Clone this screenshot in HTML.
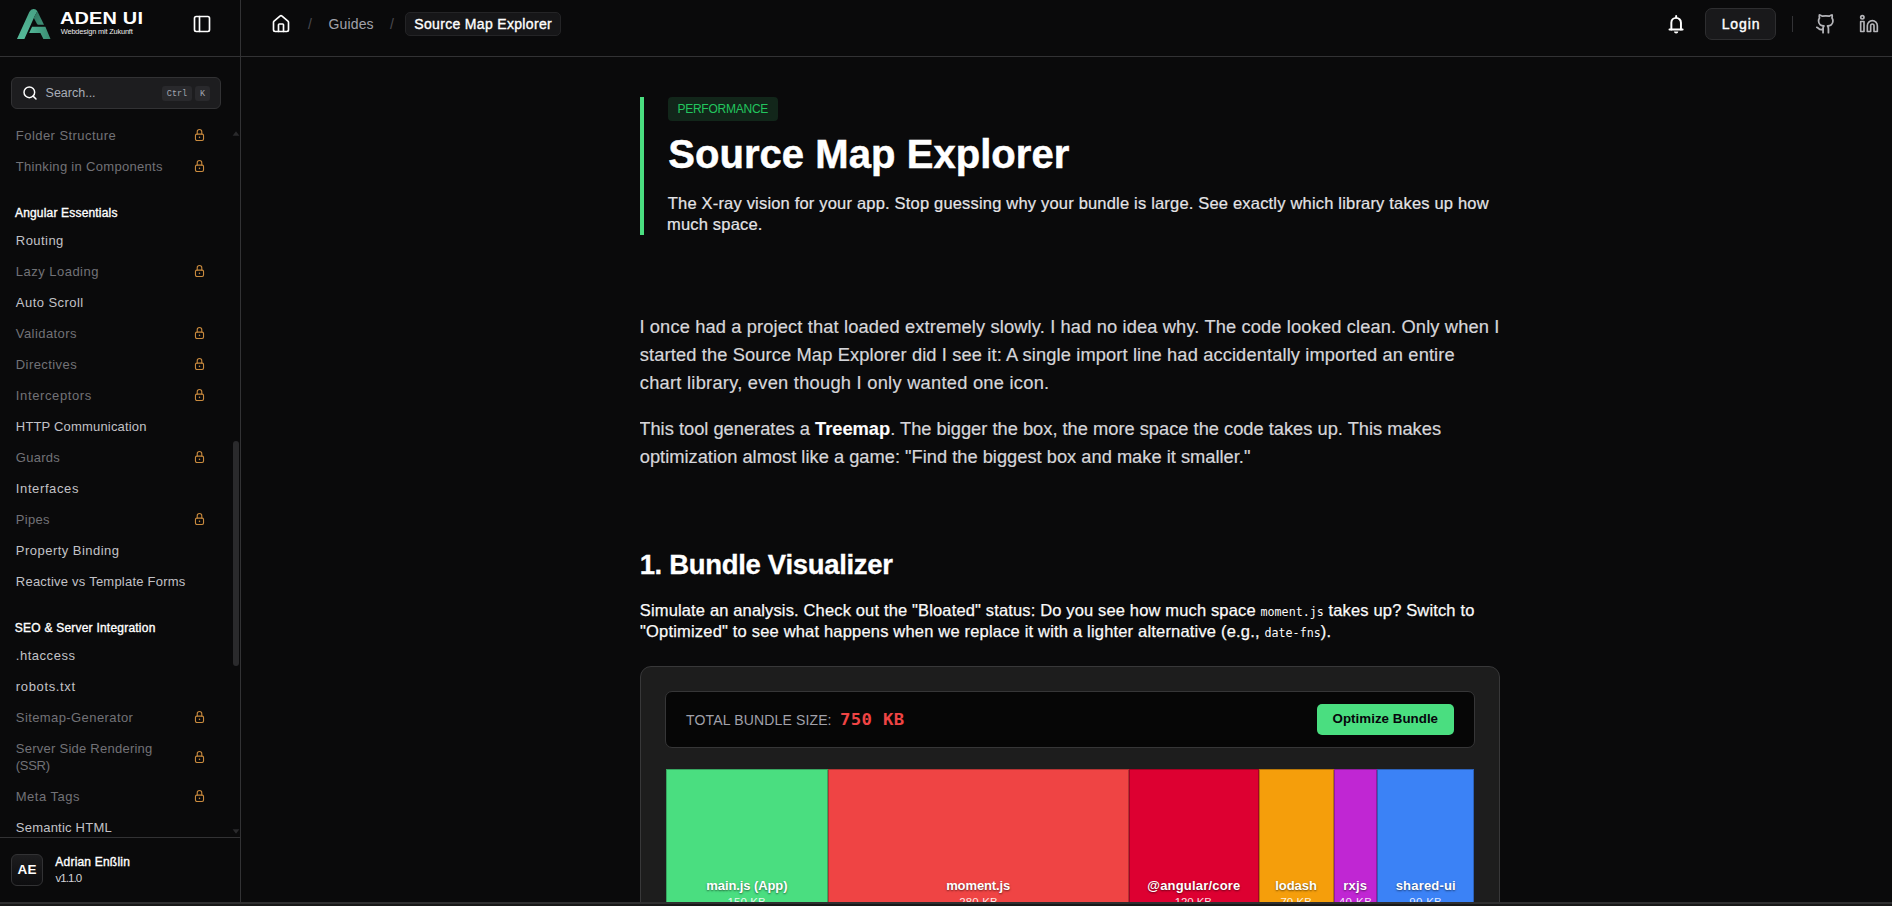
<!DOCTYPE html>
<html lang="en">
<head>
<meta charset="utf-8">
<title>Source Map Explorer - ADEN UI</title>
<style>
*{box-sizing:border-box;margin:0;padding:0}
html,body{width:1892px;height:906px;overflow:hidden;background:#0a0a0b;color:#fafafa;
  font-family:"Liberation Sans",sans-serif;}
body{position:relative}
.abs{position:absolute}
.t{position:absolute;white-space:nowrap}
/* ---------- sidebar ---------- */
#sidebar{position:absolute;left:0;top:0;width:241px;height:902px;border-right:1px solid #323234;background:#0a0a0b}
#sb-head{position:absolute;left:0;top:0;width:240px;height:57px;border-bottom:1px solid #323234}
#brand{left:60px;top:9px;font-weight:700;font-size:16.6px;line-height:20px;color:#fff;transform-origin:0 0;transform:scaleX(1.2)}
#tagline{left:61px;top:27px;font-size:7.4px;line-height:10px;color:#ececec}
#search{position:absolute;left:11px;top:77px;width:210px;height:32px;border:1px solid #323234;border-radius:6px;background:#1d1d1f}
#ph{left:35px;top:7px;font-size:12.5px;line-height:16px;color:#a9adb8}
.kbd{position:absolute;top:8px;height:15px;border-radius:3px;background:#29292c;color:#a1a5b0;font-family:"Liberation Mono",monospace;font-size:8.5px;line-height:17px;text-align:center}
#nav{position:absolute;left:0;top:120px;width:232px;height:717px;overflow:hidden}
.ni{position:absolute;left:16px;font-size:13px;line-height:17px;color:#c2c2c7;white-space:nowrap}
.ni.lk{color:#727277}
.nh{position:absolute;left:15px;font-size:12px;line-height:16px;color:#fff;white-space:nowrap;-webkit-text-stroke:.35px #fff}
.lock{position:absolute;left:194.4px;width:11px;height:13.75px;margin-top:.5px}
#sb-foot{position:absolute;left:0;top:837px;width:240px;height:65px;border-top:1px solid #323234}
#avatar{position:absolute;left:11px;top:16px;width:32px;height:32px;border-radius:6px;border:1px solid #323234;background:linear-gradient(180deg,#1d1d1f,#0d0d0f)}
#ae{left:6px;top:7px;font-weight:700;font-size:13.5px;line-height:16px;color:#fff}
#uname{left:55px;top:16px;font-size:12px;line-height:16px;color:#fff;-webkit-text-stroke:.35px #fff}
#uver{left:55px;top:32px;font-size:11.5px;line-height:16px;color:#d4d4d8}
#sbtrack .th{position:absolute;left:233px;top:441px;width:6px;height:225px;border-radius:3px;background:#2a2a2c}
/* ---------- topbar ---------- */
#topbar{position:absolute;left:241px;top:0;width:1651px;height:57px;border-bottom:1px solid #323234}
.crumb{position:absolute;top:16px;font-size:14px;line-height:17px;color:#a1a1aa;white-space:nowrap}
#cur{position:absolute;left:164px;top:12px;width:156px;height:24px;border-radius:5px;border:1px solid #242426;background:#161618}
#curt{left:9px;top:3px;font-size:14px;line-height:17px;color:#fff;-webkit-text-stroke:.35px #fff}
#login{position:absolute;left:1464px;top:8px;width:71px;height:32px;border:1px solid #2e2e30;border-radius:7px;background:#19191b}
#logint{left:17px;top:7px;font-size:14px;line-height:17px;color:#fff;-webkit-text-stroke:.4px #fff}
/* ---------- main ---------- */
#main{position:absolute;left:640px;top:57px;width:860px;height:845px;overflow:hidden}
#hero{position:absolute;left:0;top:40px;width:860px;height:138px;border-left:4px solid #4ade80}
#badge{position:absolute;left:24px;top:0;width:110px;height:24px;border-radius:4px;background:#12261a}
#badget{left:10px;top:4px;font-size:12px;line-height:16px;color:#22c55e}
h1{position:absolute;left:24px;top:33px;font-size:40px;line-height:48px;font-weight:700;color:#fff;white-space:nowrap;-webkit-text-stroke:.5px #fff}
.lead{position:absolute;left:24px;font-size:16.5px;line-height:21px;color:#e4e4e7;white-space:nowrap;-webkit-text-stroke:.2px #e4e4e7}
.p18{position:absolute;left:0;font-size:18.3px;line-height:28px;color:#d6d6da;white-space:nowrap;-webkit-text-stroke:.2px #d6d6da}
.p18 b{color:#fff}
h2{position:absolute;left:0;top:490px;font-size:27.5px;line-height:36px;font-weight:700;color:#fff;white-space:nowrap;-webkit-text-stroke:.3px #fff}
.p16{position:absolute;left:0;font-size:16.5px;line-height:21px;color:#fafafa;white-space:nowrap;-webkit-text-stroke:.25px #fafafa}
code{font-family:"DejaVu Sans Mono","Liberation Mono",monospace;font-size:11.7px;letter-spacing:0;-webkit-text-stroke:0}
#card{position:absolute;left:0;top:609px;width:860px;height:400px;border:1px solid #383839;border-radius:11px;background:#1d1d1d}
#bar{position:absolute;left:24px;top:24px;width:810px;height:57px;border:1px solid #363637;border-radius:7px;background:#060606}
#lbl{left:20px;top:19px;font-size:14px;line-height:18px;color:#a1a1aa}
#val{left:175px;top:16.5px;font-family:"DejaVu Sans Mono","Liberation Mono",monospace;font-weight:700;font-size:16px;line-height:22px;color:#ef4444;transform-origin:0 50%;transform:scaleX(1.08)}
#opt{position:absolute;left:651px;top:12px;width:137px;height:31px;border-radius:5px;background:#4ade80}
#optt{left:15px;top:7px;color:#06060c;font-weight:700;font-size:13.33px;line-height:16px}
#tree{position:absolute;left:25px;top:102px;width:808px;height:300px}
.seg{position:absolute;top:0;height:100%;border:1px solid rgba(0,0,0,.25);color:#fff;overflow:hidden}
.nm{position:absolute;top:109px;font-weight:700;font-size:13px;line-height:16px;text-shadow:0 1px 2px rgba(0,0,0,.55);white-space:nowrap;color:#fff}
.sz{position:absolute;top:125.5px;font-size:11.5px;line-height:14px;color:rgba(255,255,255,.88);white-space:nowrap}
#bottombar{position:absolute;left:0;top:902px;width:1892px;height:4px;background:#181818;border-top:2px solid #2f2f30}
</style>
<style id="fit">
#brand{letter-spacing:0.147px;margin-left:-0.22px}
#tagline{letter-spacing:-0.172px;margin-left:-0.21px}
#ph{letter-spacing:-0.005px;margin-left:-1.41px}
#n1{letter-spacing:0.448px;margin-left:-0.20px}
#n2{letter-spacing:0.310px;margin-left:-0.20px}
#n3{letter-spacing:0.177px;margin-left:-0.03px}
#n4{letter-spacing:0.450px;margin-left:-0.20px}
#n5{letter-spacing:0.478px;margin-left:-0.20px}
#n6{letter-spacing:0.457px;margin-left:-0.20px}
#n7{letter-spacing:0.430px;margin-left:-0.20px}
#n8{letter-spacing:0.420px;margin-left:-0.20px}
#n9{letter-spacing:0.621px;margin-left:-0.20px}
#n10{letter-spacing:0.179px;margin-left:-0.20px}
#n11{letter-spacing:0.252px;margin-left:-0.20px}
#n12{letter-spacing:0.613px;margin-left:-0.20px}
#n13{letter-spacing:0.274px;margin-left:-0.20px}
#n14{letter-spacing:0.475px;margin-left:-0.20px}
#n15{letter-spacing:0.231px;margin-left:-0.20px}
#n16{letter-spacing:0.222px;margin-left:-0.20px}
#n17{letter-spacing:0.524px;margin-left:-0.20px}
#n18{letter-spacing:0.639px;margin-left:-0.20px}
#n19{letter-spacing:0.408px;margin-left:-0.20px}
#n20a{letter-spacing:0.249px;margin-left:-0.20px}
#n20b{letter-spacing:-0.290px;margin-left:-0.20px}
#n21{letter-spacing:0.481px;margin-left:-0.20px}
#n22{letter-spacing:0.222px;margin-left:-0.20px}
#ae{letter-spacing:0.240px;margin-left:-0.40px}
#uname{letter-spacing:0.203px;margin-left:0.35px}
#uver{letter-spacing:-0.920px;margin-left:0.50px}
#guides{letter-spacing:0.134px;margin-left:-0.45px}
#curt{letter-spacing:0.328px;margin-left:-0.75px}
#logint{letter-spacing:0.937px;margin-left:-1.38px}
#badget{letter-spacing:-0.240px;margin-left:-0.62px}
#h1{letter-spacing:0.054px;margin-left:0.23px}
#ld1{letter-spacing:0.187px;margin-left:-0.24px}
#ld2{letter-spacing:0.193px;margin-left:-1.07px}
#p1a{letter-spacing:0.130px;margin-left:-0.60px}
#p1b{letter-spacing:0.120px;margin-left:-0.22px}
#p1c{letter-spacing:0.252px;margin-left:-0.22px}
#p2a{letter-spacing:-0.004px;margin-left:-0.71px}
#p2b{letter-spacing:0.002px;margin-left:-0.22px}
#h2{letter-spacing:-0.318px;margin-left:-0.39px}
#p3a{letter-spacing:0.149px;margin-left:-0.24px}
#p3b{letter-spacing:0.184px;margin-left:0.04px}
#lbl{letter-spacing:0.148px;margin-left:0.12px}
#val{letter-spacing:0.328px;margin-left:-1.48px}
#nm1{letter-spacing:-0.100px;margin-left:0.34px}
#nm2{letter-spacing:-0.117px;margin-left:-0.84px}
#nm3{letter-spacing:0.193px;margin-left:-0.71px}
#nm4{letter-spacing:-0.066px;margin-left:-0.73px}
#nm5{letter-spacing:0.165px;margin-left:-0.70px}
#nm6{letter-spacing:0.189px;margin-left:-0.30px}
#sz1{letter-spacing:0.098px;margin-left:-0.43px}
#sz2{letter-spacing:0.164px;margin-left:0.24px}
#sz3{letter-spacing:-0.118px;margin-left:-0.23px}
#sz4{letter-spacing:0.030px;margin-left:0.38px}
#sz5{letter-spacing:0.431px;margin-left:-0.22px}
#sz6{letter-spacing:0.284px;margin-left:0.31px}
#optt{letter-spacing:0.024px;margin-left:0.56px}
</style>
</head>
<body>
<div id="sidebar">
  <div id="sb-head">
    <svg class="abs" style="left:14px;top:6px" width="40" height="36" viewBox="14 6 40 36"><defs><linearGradient id="lg1" x1="0" y1="1" x2="0" y2="0"><stop offset="0" stop-color="#55b999"/><stop offset="1" stop-color="#48a386"/></linearGradient><linearGradient id="lg2" x1="0" y1="0" x2="1" y2="1"><stop offset="0" stop-color="#2f7660"/><stop offset="1" stop-color="#3f9077"/></linearGradient><linearGradient id="lg3" x1="0" y1="0" x2="1" y2="0"><stop offset="0" stop-color="#52b596"/><stop offset=".55" stop-color="#45a083"/><stop offset="1" stop-color="#3a8c72"/></linearGradient></defs><path d="M16.98 39L24.4 39L34.7 16L37.4 11.2Q35.7 8.700 33.400 9Q30.900 9.200 29.300 12Z" fill="url(#lg1)"/><path d="M37.4 11.2L44 24.67L38.3 24.67Q37.4 24.600 36.900 23.700L33.700 17.800L34.700 16Z" fill="url(#lg2)"/><path d="M32.07 26.85L45.4 26.85L50.5 39L43.4 39L40.4 33L29.1 33Z" fill="url(#lg3)"/></svg>
    <div class="t" id="brand">ADEN UI</div>
    <div class="t" id="tagline">Webdesign mit Zukunft</div>
    <svg class="abs" style="left:192px;top:14px" width="20" height="20" viewBox="0 0 24 24" fill="none" stroke="#fff" stroke-width="2" stroke-linecap="round" stroke-linejoin="round"><rect x="3" y="3" width="18" height="18" rx="2"/><path d="M9 3v18"/></svg>
  </div>
  <div id="search">
    <svg class="abs" style="left:10px;top:7px" width="16" height="16" viewBox="0 0 24 24" fill="none" stroke="#fff" stroke-width="2.2" stroke-linecap="round"><circle cx="11" cy="11" r="8"/><path d="M21 21l-4.3-4.3"/></svg>
    <div class="t" id="ph">Search...</div>
    <div class="kbd" style="left:150px;width:30px">Ctrl</div>
    <div class="kbd" style="left:183px;width:15px">K</div>
  </div>
  <div id="nav">
    <div class="ni lk" id="n1" style="top:6.5px">Folder Structure</div>
    <svg class="lock" style="top:7.5px" viewBox="0 0 12 15" fill="none" stroke="#c98a3e" stroke-width="1.2" stroke-linecap="round" stroke-linejoin="round"><rect x="1.6" y="6.7" width="8.8" height="6.9" rx="1.5"/><path d="M3.5 6.500V4.100a2.500 2.500 0 0 1 5 0v2.400"/><circle cx="6" cy="10.200" r=".85" fill="#c98a3e" stroke="none"/></svg>
    <div class="ni lk" id="n2" style="top:37.5px">Thinking in Components</div>
    <svg class="lock" style="top:38.5px" viewBox="0 0 12 15" fill="none" stroke="#c98a3e" stroke-width="1.2" stroke-linecap="round" stroke-linejoin="round"><rect x="1.6" y="6.7" width="8.8" height="6.9" rx="1.5"/><path d="M3.5 6.500V4.100a2.500 2.500 0 0 1 5 0v2.400"/><circle cx="6" cy="10.200" r=".85" fill="#c98a3e" stroke="none"/></svg>
    <div class="nh" id="n3" style="top:85px">Angular Essentials</div>
    <div class="ni" id="n4" style="top:111.5px">Routing</div>
    <div class="ni lk" id="n5" style="top:142.5px">Lazy Loading</div>
    <svg class="lock" style="top:143.5px" viewBox="0 0 12 15" fill="none" stroke="#c98a3e" stroke-width="1.2" stroke-linecap="round" stroke-linejoin="round"><rect x="1.6" y="6.7" width="8.8" height="6.9" rx="1.5"/><path d="M3.5 6.500V4.100a2.500 2.500 0 0 1 5 0v2.400"/><circle cx="6" cy="10.200" r=".85" fill="#c98a3e" stroke="none"/></svg>
    <div class="ni" id="n6" style="top:173.5px">Auto Scroll</div>
    <div class="ni lk" id="n7" style="top:204.5px">Validators</div>
    <svg class="lock" style="top:205.5px" viewBox="0 0 12 15" fill="none" stroke="#c98a3e" stroke-width="1.2" stroke-linecap="round" stroke-linejoin="round"><rect x="1.6" y="6.7" width="8.8" height="6.9" rx="1.5"/><path d="M3.5 6.500V4.100a2.500 2.500 0 0 1 5 0v2.400"/><circle cx="6" cy="10.200" r=".85" fill="#c98a3e" stroke="none"/></svg>
    <div class="ni lk" id="n8" style="top:235.5px">Directives</div>
    <svg class="lock" style="top:236.5px" viewBox="0 0 12 15" fill="none" stroke="#c98a3e" stroke-width="1.2" stroke-linecap="round" stroke-linejoin="round"><rect x="1.6" y="6.7" width="8.8" height="6.9" rx="1.5"/><path d="M3.5 6.500V4.100a2.500 2.500 0 0 1 5 0v2.400"/><circle cx="6" cy="10.200" r=".85" fill="#c98a3e" stroke="none"/></svg>
    <div class="ni lk" id="n9" style="top:266.5px">Interceptors</div>
    <svg class="lock" style="top:267.5px" viewBox="0 0 12 15" fill="none" stroke="#c98a3e" stroke-width="1.2" stroke-linecap="round" stroke-linejoin="round"><rect x="1.6" y="6.7" width="8.8" height="6.9" rx="1.5"/><path d="M3.5 6.500V4.100a2.500 2.500 0 0 1 5 0v2.400"/><circle cx="6" cy="10.200" r=".85" fill="#c98a3e" stroke="none"/></svg>
    <div class="ni" id="n10" style="top:297.5px">HTTP Communication</div>
    <div class="ni lk" id="n11" style="top:328.5px">Guards</div>
    <svg class="lock" style="top:329.5px" viewBox="0 0 12 15" fill="none" stroke="#c98a3e" stroke-width="1.2" stroke-linecap="round" stroke-linejoin="round"><rect x="1.6" y="6.7" width="8.8" height="6.9" rx="1.5"/><path d="M3.5 6.500V4.100a2.500 2.500 0 0 1 5 0v2.400"/><circle cx="6" cy="10.200" r=".85" fill="#c98a3e" stroke="none"/></svg>
    <div class="ni" id="n12" style="top:359.5px">Interfaces</div>
    <div class="ni lk" id="n13" style="top:390.5px">Pipes</div>
    <svg class="lock" style="top:391.5px" viewBox="0 0 12 15" fill="none" stroke="#c98a3e" stroke-width="1.2" stroke-linecap="round" stroke-linejoin="round"><rect x="1.6" y="6.7" width="8.8" height="6.9" rx="1.5"/><path d="M3.5 6.500V4.100a2.500 2.500 0 0 1 5 0v2.400"/><circle cx="6" cy="10.200" r=".85" fill="#c98a3e" stroke="none"/></svg>
    <div class="ni" id="n14" style="top:421.5px">Property Binding</div>
    <div class="ni" id="n15" style="top:452.5px">Reactive vs Template Forms</div>
    <div class="nh" id="n16" style="top:500px">SEO &amp; Server Integration</div>
    <div class="ni" id="n17" style="top:526.5px">.htaccess</div>
    <div class="ni" id="n18" style="top:557.5px">robots.txt</div>
    <div class="ni lk" id="n19" style="top:588.5px">Sitemap-Generator</div>
    <svg class="lock" style="top:589.5px" viewBox="0 0 12 15" fill="none" stroke="#c98a3e" stroke-width="1.2" stroke-linecap="round" stroke-linejoin="round"><rect x="1.6" y="6.7" width="8.8" height="6.9" rx="1.5"/><path d="M3.5 6.500V4.100a2.500 2.500 0 0 1 5 0v2.400"/><circle cx="6" cy="10.200" r=".85" fill="#c98a3e" stroke="none"/></svg>
    <div class="ni lk" id="n20a" style="top:619.5px">Server Side Rendering</div>
    <div class="ni lk" id="n20b" style="top:636.5px">(SSR)</div>
    <svg class="lock" style="top:629px" viewBox="0 0 12 15" fill="none" stroke="#c98a3e" stroke-width="1.2" stroke-linecap="round" stroke-linejoin="round"><rect x="1.6" y="6.7" width="8.8" height="6.9" rx="1.5"/><path d="M3.5 6.500V4.100a2.500 2.500 0 0 1 5 0v2.400"/><circle cx="6" cy="10.200" r=".85" fill="#c98a3e" stroke="none"/></svg>
    <div class="ni lk" id="n21" style="top:667.5px">Meta Tags</div>
    <svg class="lock" style="top:668.5px" viewBox="0 0 12 15" fill="none" stroke="#c98a3e" stroke-width="1.2" stroke-linecap="round" stroke-linejoin="round"><rect x="1.6" y="6.7" width="8.8" height="6.9" rx="1.5"/><path d="M3.5 6.500V4.100a2.500 2.500 0 0 1 5 0v2.400"/><circle cx="6" cy="10.200" r=".85" fill="#c98a3e" stroke="none"/></svg>
    <div class="ni" id="n22" style="top:698.5px">Semantic HTML</div>
  </div>
  <div id="sbtrack">
    <svg class="abs" style="left:232px;top:131px" width="8" height="5" viewBox="0 0 8 5"><path d="M4 0.3L7.4 4.7H.6z" fill="#2a2a2c"/></svg>
    <div class="th"></div>
    <svg class="abs" style="left:232px;top:829px" width="8" height="5" viewBox="0 0 8 5"><path d="M4 4.7L7.4 .3H.6z" fill="#2a2a2c"/></svg>
  </div>
  <div id="sb-foot">
    <div id="avatar"><div class="t" id="ae">AE</div></div>
    <div class="t" id="uname">Adrian Enßlin</div>
    <div class="t" id="uver">v1.1.0</div>
  </div>
</div>

<div id="topbar">
  <svg class="abs" style="left:30px;top:14px" width="20" height="20" viewBox="0 0 24 24" fill="none" stroke="#fff" stroke-width="2" stroke-linecap="round" stroke-linejoin="round"><path d="M15 21v-8a1 1 0 0 0-1-1h-4a1 1 0 0 0-1 1v8"/><path d="M3 10a2 2 0 0 1 .709-1.528l7-5.999a2 2 0 0 1 2.582 0l7 5.999A2 2 0 0 1 21 10v9a2 2 0 0 1-2 2H5a2 2 0 0 1-2-2z"/></svg>
  <div class="crumb" id="sl1" style="left:67px;color:#4a4a50">/</div>
  <div class="crumb" id="guides" style="left:88px">Guides</div>
  <div class="crumb" id="sl2" style="left:149px;color:#4a4a50">/</div>
  <div id="cur"><div class="t" id="curt">Source Map Explorer</div></div>
  <svg class="abs" style="left:1425px;top:14px" width="20" height="20" viewBox="0 0 20 20" fill="none" stroke="#fff" stroke-width="1.95" stroke-linecap="round" stroke-linejoin="round"><path d="M10.15 2v1.500"/><path d="M5.350 15.500V8.650a4.800 4.800 0 0 1 9.600 0V15.500"/><path d="M3.500 15.500H16.600"/><path d="M8 17.400h4.300a2.150 2.150 0 0 1-4.300 0z" fill="#fff" stroke="none"/></svg>
  <div id="login"><div class="t" id="logint">Login</div></div>
  <div class="abs" style="left:1551px;top:16px;width:1px;height:16px;background:#333336"></div>
  <svg class="abs" style="left:1573.9px;top:13px" width="21.5" height="21.5" viewBox="0 0 24 24" fill="none" stroke="#b4b4b8" stroke-width="2" stroke-linecap="round" stroke-linejoin="round"><path d="M15 22v-4a4.800 4.800 0 0 0-1-3.500c3 0 6-2 6-5.500.080-1.250-.270-2.480-1-3.500.280-1.150.280-2.350 0-3.500 0 0-1 0-3 1.500-2.640-.500-5.360-.500-8 0C6 2 5 2 5 2c-.300 1.150-.300 2.350 0 3.500A5.403 5.403 0 0 0 4 9c0 3.500 3 5.500 6 5.500-.390.490-.680 1.050-.850 1.650-.170.600-.220 1.230-.150 1.850v4"/><path d="M9 18c-4.510 2-5-2-7-2"/></svg>
  <svg class="abs" style="left:1618px;top:14px" width="20" height="20" viewBox="0 0 24 24" fill="none" stroke="#b4b4b8" stroke-width="2" stroke-linecap="round" stroke-linejoin="round"><path d="M16 8a6 6 0 0 1 6 6v7h-4v-7a2 2 0 0 0-2-2 2 2 0 0 0-2 2v7h-4v-7a6 6 0 0 1 6-6z"/><rect width="4" height="12" x="2" y="9"/><circle cx="4" cy="4" r="2"/></svg>
</div>

<div id="main">
  <div id="hero">
    <div id="badge"><div class="t" id="badget">PERFORMANCE</div></div>
    <h1 id="h1">Source Map Explorer</h1>
    <div class="lead" id="ld1" style="top:96px">The X-ray vision for your app. Stop guessing why your bundle is large. See exactly which library takes up how</div>
    <div class="lead" id="ld2" style="top:117px">much space.</div>
  </div>
  <div class="p18" id="p1a" style="top:256px">I once had a project that loaded extremely slowly. I had no idea why. The code looked clean. Only when I</div>
  <div class="p18" id="p1b" style="top:284px">started the Source Map Explorer did I see it: A single import line had accidentally imported an entire</div>
  <div class="p18" id="p1c" style="top:312px">chart library, even though I only wanted one icon.</div>
  <div class="p18" id="p2a" style="top:358px">This tool generates a <b>Treemap</b>. The bigger the box, the more space the code takes up. This makes</div>
  <div class="p18" id="p2b" style="top:386px">optimization almost like a game: "Find the biggest box and make it smaller."</div>
  <h2 id="h2">1. Bundle Visualizer</h2>
  <div class="p16" id="p3a" style="top:543px">Simulate an analysis. Check out the "Bloated" status: Do you see how much space <code>moment.js</code> takes up? Switch to</div>
  <div class="p16" id="p3b" style="top:564px">"Optimized" to see what happens when we replace it with a lighter alternative (e.g., <code>date-fns</code>).</div>
  <div id="card">
    <div id="bar">
      <div class="t" id="lbl">TOTAL BUNDLE SIZE:</div>
      <div class="t" id="val">750 KB</div>
      <div id="opt"><div class="t" id="optt">Optimize Bundle</div></div>
    </div>
    <div id="tree">
      <div class="seg" style="left:0;width:162px;background:#4ade80"></div>
      <div class="seg" style="left:162px;width:301px;background:#ef4444"></div>
      <div class="seg" style="left:463px;width:130px;background:#dd0031"></div>
      <div class="seg" style="left:593px;width:75px;background:#f59e0b"></div>
      <div class="seg" style="left:668px;width:43px;background:#c026d3"></div>
      <div class="seg" style="left:711px;width:97px;background:#3b82f6"></div>
      <div class="nm" id="nm1" style="left:40px">main.js (App)</div><div class="sz" id="sz1" style="left:62px">150 KB</div>
      <div class="nm" id="nm2" style="left:281px">moment.js</div><div class="sz" id="sz2" style="left:293px">280 KB</div>
      <div class="nm" id="nm3" style="left:482px">@angular/core</div><div class="sz" id="sz3" style="left:509px">120 KB</div>
      <div class="nm" id="nm4" style="left:610px">lodash</div><div class="sz" id="sz4" style="left:614px">70 KB</div>
      <div class="nm" id="nm5" style="left:678px">rxjs</div><div class="sz" id="sz5" style="left:673px">40 KB</div>
      <div class="nm" id="nm6" style="left:730px">shared-ui</div><div class="sz" id="sz6" style="left:743px">90 KB</div>
    </div>
  </div>
</div>
<div id="bottombar"></div>
</body>
</html>
